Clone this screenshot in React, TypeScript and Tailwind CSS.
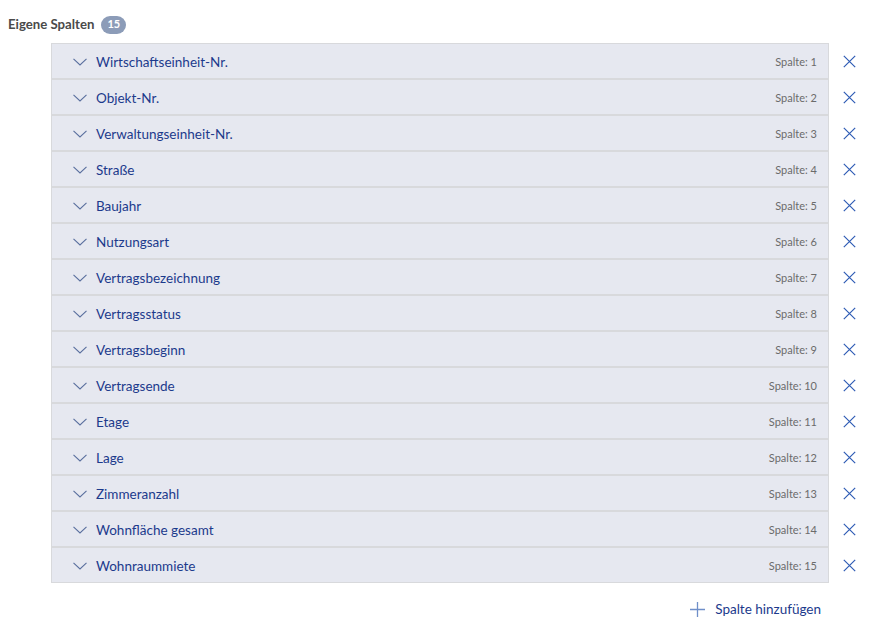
import React from "react";

const items = [
  "Wirtschaftseinheit-Nr.",
  "Objekt-Nr.",
  "Verwaltungseinheit-Nr.",
  "Straße",
  "Baujahr",
  "Nutzungsart",
  "Vertragsbezeichnung",
  "Vertragsstatus",
  "Vertragsbeginn",
  "Vertragsende",
  "Etage",
  "Lage",
  "Zimmeranzahl",
  "Wohnfläche gesamt",
  "Wohnraummiete",
];

function Chevron() {
  return (
    <svg width="14" height="8" viewBox="0 0 14 8" fill="none">
      <path d="M0.5 0.8 L7 7 L13.5 0.8" stroke="#5a6f9e" strokeWidth="1.1" />
    </svg>
  );
}

function XIcon() {
  return (
    <svg width="13" height="13" viewBox="0 0 13 13" fill="none">
      <path d="M0.8 0.8 L12.2 12.2 M12.2 0.8 L0.8 12.2" stroke="#2f5cb5" strokeWidth="1.2" />
    </svg>
  );
}

function Plus() {
  return (
    <svg width="15" height="15" viewBox="0 0 15 15" fill="none">
      <path d="M7.5 0 V15 M0 7.5 H15" stroke="#6f8fc9" strokeWidth="1.3" />
    </svg>
  );
}

export default function App() {
  return (
    <div className="w-[870px] h-[623px] bg-white text-[13.5px]" style={{ fontFamily: "Lato, 'Noto Sans', sans-serif" }}>
      <div className="flex items-center gap-[7px] pl-[8px] pt-[13px] h-[36px]">
        <span className="font-bold text-[13.2px] text-[#4a4a4a]">Eigene Spalten</span>
        <span className="rounded-full bg-[#8c9cb8] text-white text-[11px] font-bold h-[18px] px-[6px] flex items-center">15</span>
      </div>
      <div className="pl-[51px] pt-[7px] flex flex-col">
        {items.map((t, i) => (
          <div key={t} className="flex items-center">
            <div className="w-[778px] h-[36px] border border-[#d8d9dc] bg-[#e6e8f0] flex items-center pl-[21px] pr-[11px] pt-[2px]">
              <Chevron />
              <span className="ml-[9px] text-[#1c3a8c]">{t}</span>
              <span className="ml-auto text-[11px] text-[#6b6b6b]">Spalte: {i + 1}</span>
            </div>
            <div className="w-[41px] flex justify-center">
              <XIcon />
            </div>
          </div>
        ))}
      </div>
      <div className="flex items-center justify-end pr-[49px] mt-[16px] gap-[10px]">
        <Plus />
        <span className="text-[#1c3a8c]">Spalte hinzufügen</span>
      </div>
    </div>
  );
}
